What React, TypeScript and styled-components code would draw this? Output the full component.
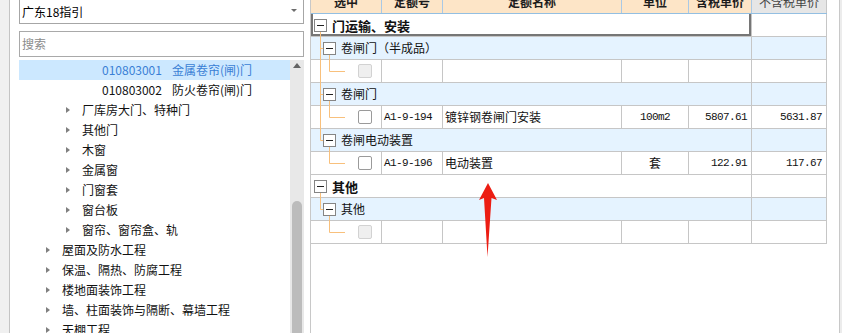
import React from 'react';
import styled, { createGlobalStyle } from 'styled-components';

const GlobalStyle = createGlobalStyle`
  html, body { margin: 0; padding: 0; background: #fff; overflow: hidden; }
  body {
    font-family: "Noto Sans CJK SC", "Microsoft YaHei", sans-serif;
    font-size: 12px;
    color: #111;
  }
  * { box-sizing: border-box; }
`;

const Page = styled.div`
  position: relative;
  display: flex;
  width: 842px;
  height: 333px;
  overflow: hidden;
  background: #fff;
`;

const SideStrip = styled.div`
  flex: none;
  width: 10px;
  background: #f0f0f0;
  border-right: 1px solid #c4c4c4;
`;

const LeftPanel = styled.div`
  flex: none;
  width: 300px;
  display: flex;
  flex-direction: column;
  padding: 0 6px 0 9px;
  background: #fff;
`;

const SelectBox = styled.div`
  margin-top: -1px;
  height: 25px;
  border: 1px solid #a6a6a6;
  display: flex;
  align-items: center;
  justify-content: space-between;
  padding: 0 6px 0 2px;
  font-size: 12px;
  color: #000;
  line-height: 1;
`;

const SelectCaret = styled.span`
  width: 0;
  height: 0;
  border-left: 3px solid transparent;
  border-right: 3px solid transparent;
  border-top: 3px solid #6d6d6d;
  margin-top: -2px;
`;

const SearchBox = styled.div`
  margin-top: 7px;
  height: 26px;
  border: 1px solid #a9a9a9;
  display: flex;
  align-items: center;
  padding: 0 2px;
  color: #8c8c8c;
  font-size: 12px;
  line-height: 1;
`;

const TreeArea = styled.div`
  margin-top: 3px;
  flex: 1;
  display: flex;
  min-height: 0;
  overflow: hidden;
`;

const TreeList = styled.div`
  flex: 1;
  display: flex;
  flex-direction: column;
`;

const TreeRow = styled.div<{ $level: number; $selected?: boolean }>`
  flex: none;
  height: 20px;
  display: flex;
  align-items: center;
  padding-left: ${(p) => 27 + (p.$level - 2) * 20}px;
  background: ${(p) => (p.$selected ? '#cce8ff' : 'transparent')};
  color: ${(p) => (p.$selected ? '#3a7fd5' : '#111')};
  font-size: 12px;
  line-height: 20px;
  white-space: nowrap;
`;

const ArrowSlot = styled.span`
  flex: none;
  width: 16px;
  display: flex;
  align-items: center;
`;

const Expander = styled.span`
  width: 0;
  height: 0;
  border-top: 3.5px solid transparent;
  border-bottom: 3.5px solid transparent;
  border-left: 4px solid #7f7f7f;
`;

const CodeText = styled.span`
  margin-right: 10px;
`;

const ScrollTrack = styled.div`
  flex: none;
  width: 14px;
  background: #e8e8e8;
  display: flex;
  flex-direction: column;
  align-items: center;
`;

const ScrollUp = styled.span`
  margin-top: 3px;
  margin-right: 1px;
  width: 0;
  height: 0;
  border-left: 4.5px solid transparent;
  border-right: 4.5px solid transparent;
  border-bottom: 5px solid #646464;
`;

const ScrollThumb = styled.div<{ $offset: number }>`
  margin-top: ${(p) => p.$offset}px;
  margin-right: 1px;
  width: 10px;
  height: 300px;
  border-radius: 5px 5px 0 0;
  background: #bcbcbc;
`;

const RightPanel = styled.div`
  flex: none;
  width: 530px;
  border-left: 1px solid #c8c8c8;
  border-right: 1px solid #c8c8c8;
  overflow: hidden;
  background: #fff;
`;

const RightEdge = styled.div`
  flex: 1;
  background: #ececec;
`;

const Table = styled.div`
  margin-top: -10px;
  width: 516px;
  display: flex;
  flex-direction: column;
`;

const cols = '71px 61px 179px 67px 63px 75px';

const HeaderRow = styled.div`
  display: grid;
  grid-template-columns: ${cols};
  height: 24px;
  background: #fde5c7;
  border-bottom: 1px solid #93bfe2;
`;

const HeaderCell = styled.div<{ $muted?: boolean }>`
  display: flex;
  align-items: center;
  justify-content: center;
  border-right: 1px solid ${(p) => (p.$muted ? '#c6c6c6' : '#a9c9e6')};
  background: ${(p) => (p.$muted ? '#e6e6e6' : 'transparent')};
  color: ${(p) => (p.$muted ? '#444' : '#1c1c1c')};
  font-weight: ${(p) => (p.$muted ? 400 : 700)};
  font-size: 12px;
  line-height: 1;
  padding-top: 1px;
`;

const Row = styled.div<{ $tone: 'white' | 'blue' }>`
  display: grid;
  grid-template-columns: ${cols};
  height: 23px;
  background: ${(p) => (p.$tone === 'blue' ? '#e5f3ff' : '#fff')};
`;

const Cell = styled.div<{
  $span?: number;
  $align?: 'left' | 'center' | 'right';
  $mono?: boolean;
  $focus?: boolean;
  $bold?: boolean;
}>`
  grid-column: span ${(p) => p.$span ?? 1};
  display: flex;
  align-items: center;
  justify-content: ${(p) =>
    p.$align === 'center' ? 'center' : p.$align === 'right' ? 'flex-end' : 'flex-start'};
  border-right: 1px solid #c6c6c6;
  border-bottom: 1px solid #c6c6c6;
  padding: ${(p) => (p.$align === 'right' ? '0 4px 0 2px' : '0 2px')};
  font-family: ${(p) =>
    p.$mono ? '"Liberation Mono", "DejaVu Sans Mono", monospace' : 'inherit'};
  font-size: ${(p) => (p.$mono ? '11px' : p.$bold ? '13px' : '12px')};
  letter-spacing: ${(p) => (p.$mono ? '-0.6px' : '0')};
  font-weight: ${(p) => (p.$bold ? 700 : 400)};
  color: #111;
  line-height: 1;
  white-space: nowrap;
  box-shadow: ${(p) =>
    p.$focus ? 'inset 2px 0 0 #767676, inset -2px 0 0 #767676, inset 0 -2px 0 #767676' : 'none'};
`;

const TreeCell = styled(Cell)`
  padding: 0;
  align-items: stretch;
`;

const TreeLabel = styled.span<{ $bold?: boolean }>`
  display: flex;
  align-items: center;
  font-size: ${(p) => (p.$bold ? '13px' : '12px')};
  font-weight: ${(p) => (p.$bold ? 700 : 400)};
`;

const CheckBox = styled.span<{ $disabled?: boolean }>`
  align-self: center;
  flex: none;
  width: 14px;
  height: 14px;
  border-radius: 2px;
  border: 1px solid ${(p) => (p.$disabled ? '#d2d2d2' : '#9a9a9a')};
  background: ${(p) => (p.$disabled ? '#efefef' : '#fff')};
`;

const Overlay = styled.svg`
  position: absolute;
  left: 0;
  top: 0;
  pointer-events: none;
`;

const LINE = '#f8c07c';

function Connector({
  kind,
  rail,
  railHalf,
}: {
  kind: 'group' | 'sub' | 'item';
  rail?: boolean;
  railHalf?: boolean;
}) {
  const w = kind === 'group' ? 21 : kind === 'sub' ? 30 : 47;
  return (
    <svg width={w} height={22} style={{ overflow: 'visible', flex: 'none' }}>
      {rail && <line x1={9.5} y1={0} x2={9.5} y2={23} stroke={LINE} />}
      {railHalf && <line x1={9.5} y1={0} x2={9.5} y2={11.5} stroke={LINE} />}
      {kind === 'group' && (
        <>
          <line x1={9.5} y1={18} x2={9.5} y2={23} stroke={LINE} />
          <rect x={3.5} y={5.5} width={12} height={12} fill="#fff" stroke="#858585" />
          <line x1={6} y1={11.5} x2={13} y2={11.5} stroke="#222" />
        </>
      )}
      {kind === 'sub' && (
        <>
          <line x1={9.5} y1={11.5} x2={12.5} y2={11.5} stroke={LINE} />
          <line x1={18.5} y1={18} x2={18.5} y2={23} stroke={LINE} />
          <rect x={12.5} y={5.5} width={12} height={12} fill="#fff" stroke="#858585" />
          <line x1={15} y1={11.5} x2={22} y2={11.5} stroke="#222" />
        </>
      )}
      {kind === 'item' && (
        <>
          <line x1={18.5} y1={0} x2={18.5} y2={11.5} stroke={LINE} />
          <line x1={18.5} y1={11.5} x2={34} y2={11.5} stroke={LINE} />
        </>
      )}
    </svg>
  );
}

type TreeItem = { level: number; name: string; code?: string; arrow?: boolean; selected?: boolean };

const treeItems: TreeItem[] = [
  { level: 4, code: '010803001', name: '金属卷帘(闸)门', selected: true },
  { level: 4, code: '010803002', name: '防火卷帘(闸)门' },
  { level: 3, name: '厂库房大门、特种门', arrow: true },
  { level: 3, name: '其他门', arrow: true },
  { level: 3, name: '木窗', arrow: true },
  { level: 3, name: '金属窗', arrow: true },
  { level: 3, name: '门窗套', arrow: true },
  { level: 3, name: '窗台板', arrow: true },
  { level: 3, name: '窗帘、窗帘盒、轨', arrow: true },
  { level: 2, name: '屋面及防水工程', arrow: true },
  { level: 2, name: '保温、隔热、防腐工程', arrow: true },
  { level: 2, name: '楼地面装饰工程', arrow: true },
  { level: 2, name: '墙、柱面装饰与隔断、幕墙工程', arrow: true },
  { level: 2, name: '天棚工程', arrow: true },
];

type TRow =
  | { kind: 'group'; label: string; focus?: boolean }
  | { kind: 'sub'; label: string; last: boolean }
  | {
      kind: 'item';
      rail: boolean;
      code?: string;
      name?: string;
      unit?: string;
      price?: string;
      net?: string;
      disabled?: boolean;
    };

const rows: TRow[] = [
  { kind: 'group', label: '门运输、安装', focus: true },
  { kind: 'sub', label: '卷闸门（半成品）', last: false },
  { kind: 'item', rail: true, disabled: true },
  { kind: 'sub', label: '卷闸门', last: false },
  {
    kind: 'item',
    rail: true,
    code: 'A1-9-194',
    name: '镀锌钢卷闸门安装',
    unit: '100m2',
    price: '5807.61',
    net: '5631.87',
  },
  { kind: 'sub', label: '卷闸电动装置', last: true },
  {
    kind: 'item',
    rail: false,
    code: 'A1-9-196',
    name: '电动装置',
    unit: '套',
    price: '122.91',
    net: '117.67',
  },
  { kind: 'group', label: '其他' },
  { kind: 'sub', label: '其他', last: true },
  { kind: 'item', rail: false, disabled: true },
];

const headers = ['选中', '定额号', '定额名称', '单位', '含税单价'];

function TableRow({ row }: { row: TRow }) {
  if (row.kind === 'group') {
    return (
      <Row $tone="white">
        <TreeCell $span={5} $focus={row.focus}>
          <Connector kind="group" />
          <TreeLabel $bold>{row.label}</TreeLabel>
        </TreeCell>
        <Cell />
      </Row>
    );
  }
  if (row.kind === 'sub') {
    return (
      <Row $tone="blue">
        <TreeCell $span={5}>
          <Connector kind="sub" rail={!row.last} railHalf={row.last} />
          <TreeLabel>{row.label}</TreeLabel>
        </TreeCell>
        <Cell />
      </Row>
    );
  }
  return (
    <Row $tone="white">
      <TreeCell>
        <Connector kind="item" rail={row.rail} />
        <CheckBox $disabled={row.disabled} />
      </TreeCell>
      <Cell $mono>{row.code}</Cell>
      <Cell>{row.name}</Cell>
      <Cell $align="center" $mono={row.unit !== '套'}>
        {row.unit}
      </Cell>
      <Cell $align="right" $mono>
        {row.price}
      </Cell>
      <Cell $align="right" $mono>
        {row.net}
      </Cell>
    </Row>
  );
}

export default function App() {
  return (
    <>
      <GlobalStyle />
      <Page>
        <SideStrip />
        <LeftPanel>
          <SelectBox>
            <span>广东18指引</span>
            <SelectCaret />
          </SelectBox>
          <SearchBox>搜索</SearchBox>
          <TreeArea>
            <TreeList>
              {treeItems.map((t, i) => (
                <TreeRow key={i} $level={t.level} $selected={t.selected}>
                  <ArrowSlot>{t.arrow && <Expander />}</ArrowSlot>
                  {t.code && <CodeText>{t.code}</CodeText>}
                  <span>{t.name}</span>
                </TreeRow>
              ))}
            </TreeList>
            <ScrollTrack>
              <ScrollUp />
              <ScrollThumb $offset={133} />
            </ScrollTrack>
          </TreeArea>
        </LeftPanel>
        <RightPanel>
          <Table>
            <HeaderRow>
              {headers.map((h) => (
                <HeaderCell key={h}>{h}</HeaderCell>
              ))}
              <HeaderCell $muted>不含税单价</HeaderCell>
            </HeaderRow>
            {rows.map((r, i) => (
              <TableRow key={i} row={r} />
            ))}
          </Table>
        </RightPanel>
        <RightEdge />
        <Overlay width={842} height={333} viewBox="0 0 842 333">
          <polygon
            points="488,183 497,200 491.5,198 487.5,257 484,198 479,200"
            fill="#ec1d13"
          />
        </Overlay>
      </Page>
    </>
  );
}
